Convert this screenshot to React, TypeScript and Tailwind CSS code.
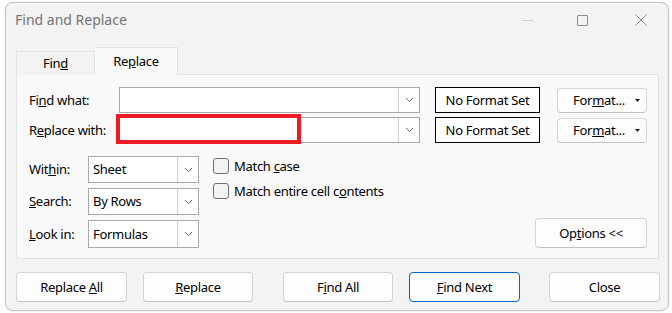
import React from 'react';

const font = { fontFamily: '"Noto Sans", "Liberation Sans", sans-serif' };

function Chevron() {
  return (
    <svg width="9" height="6" viewBox="0 0 9 6" className="block">
      <path d="M1 1 L4.5 4.5 L8 1" fill="none" stroke="#6b6b6b" strokeWidth="1" />
    </svg>
  );
}

function Combo({ width, height, value }: { width: string; height: string; value?: string }) {
  return (
    <div className={`flex ${width} ${height} border border-[#a8a8a8] bg-white`}>
      <div className="flex-1 flex items-center pl-[4px] text-black">{value}</div>
      <div className="w-[21px] flex items-center justify-center border-l border-[#cfcfcf]">
        <Chevron />
      </div>
    </div>
  );
}

function FormatButton() {
  return (
    <div className="ml-[17px] w-[90px] h-[25px] flex items-center justify-end pr-[6px] rounded-[4px] border border-[#d3d3d3] border-b-[#c2c2c2] bg-[#fdfdfd] text-black">
      <span>
        For<u>m</u>at...
      </span>
      <svg width="5" height="3" viewBox="0 0 5 3" className="ml-[10px]">
        <path d="M0 0 L5 0 L2.5 3 Z" fill="#1a1a1a" />
      </svg>
    </div>
  );
}

function NoFormat() {
  return (
    <div className="ml-[15px] w-[105px] h-[26px] flex items-center justify-center border border-black bg-white text-black">
      No Format Set
    </div>
  );
}

function Button({ children, className = '', primary = false }: { children: React.ReactNode; className?: string; primary?: boolean }) {
  return (
    <div
      className={`h-[30px] flex items-center justify-center rounded-[4px] border bg-[#fdfdfd] text-black ${
        primary ? 'border-[#0067c0]' : 'border-[#d3d3d3] border-b-[#c2c2c2]'
      } ${className}`}
    >
      <span>{children}</span>
    </div>
  );
}

function Checkbox({ children }: { children: React.ReactNode }) {
  return (
    <div className="flex items-center h-[16px]">
      <div className="w-[16px] h-[16px] rounded-[3px] border border-[#707070] bg-[#f3f3f3]" />
      <span className="ml-[5px] text-black">{children}</span>
    </div>
  );
}

export default function App() {
  return (
    <div className="w-[672px] h-[313px] bg-white overflow-hidden text-[13px] leading-none tracking-[-0.3px]" style={font}>
      <div className="ml-[5px] mt-[2px] w-[664px] h-[309px] rounded-[8px] border border-[#c4c4c4] bg-[#f3f3f3] flex flex-col shadow-[0_0_2px_rgba(0,0,0,0.15)]">
        {/* title bar */}
        <div className="h-[34px] flex items-center pl-[9px] pr-[21px] tracking-normal">
          <span className="text-[14px] text-[#737373]">Find and Replace</span>
          <div className="ml-auto flex items-center">
            <div className="w-[11px] h-px bg-[#cfcfcf]" />
            <div className="ml-[44px] w-[11px] h-[11px] border border-[#8c8c8c] rounded-[1px]" />
            <svg width="12" height="12" viewBox="0 0 12 12" className="ml-[47px]">
              <path d="M0.5 0.5 L11.5 11.5 M11.5 0.5 L0.5 11.5" stroke="#8c8c8c" strokeWidth="1" />
            </svg>
          </div>
        </div>

        {/* tabs */}
        <div className="mt-[11px] ml-[10px] flex items-end h-[27px] relative z-10 -mb-px">
          <div className="w-[79px] h-[24px] flex items-center justify-center border border-b-0 border-[#e3e3e3] bg-[#f3f3f3] text-black">
            <span>
              Fin<u>d</u>
            </span>
          </div>
          <div className="w-[83px] h-[28px] flex items-center justify-center border border-b-0 border-l-0 border-[#e3e3e3] bg-[#f9f9f9] text-black pb-[1px]">
            <span>
              Re<u>p</u>lace
            </span>
          </div>
        </div>

        {/* panel */}
        <div className="ml-[10px] w-[643px] h-[185px] border border-[#e3e3e3] bg-[#f9f9f9] pt-[12px] pl-[12px] pr-[11px] text-black">
          <div className="flex items-center">
            <div className="w-[90px]">
              Fi<u>n</u>d what:
            </div>
            <Combo width="w-[301px]" height="h-[26px]" />
            <NoFormat />
            <FormatButton />
          </div>
          <div className="flex items-center mt-[4px]">
            <div className="w-[90px]">
              R<u>e</u>place with:
            </div>
            <div className="relative">
              <Combo width="w-[301px]" height="h-[26px]" />
              <div className="absolute left-[-3px] top-[-3px] w-[185px] h-[30px] border-[4px] border-[#ed1c24]" />
            </div>
            <NoFormat />
            <FormatButton />
          </div>

          <div className="flex mt-[13px]">
            <div className="flex flex-col gap-[5px]">
              <div className="flex items-center">
                <div className="w-[59px]">
                  Wit<u>h</u>in:
                </div>
                <Combo width="w-[111px]" height="h-[27px]" value="Sheet" />
              </div>
              <div className="flex items-center">
                <div className="w-[59px]">
                  <u>S</u>earch:
                </div>
                <Combo width="w-[111px]" height="h-[27px]" value="By Rows" />
              </div>
              <div className="flex items-center">
                <div className="w-[59px]">
                  <u>L</u>ook in:
                </div>
                <Combo width="w-[111px]" height="h-[28px]" value="Formulas" />
              </div>
            </div>
            <div className="ml-[14px] pt-[2px] flex flex-col gap-[9px]">
              <Checkbox>
                Match <u>c</u>ase
              </Checkbox>
              <Checkbox>
                Match entire cell c<u>o</u>ntents
              </Checkbox>
            </div>
            <div className="ml-auto self-end">
              <Button className="w-[112px]">
                Op<u>t</u>ions &lt;&lt;
              </Button>
            </div>
          </div>
        </div>

        {/* bottom buttons */}
        <div className="mt-[13px] ml-[10px] flex">
          <Button className="w-[111px]">
            Replace <u>A</u>ll
          </Button>
          <Button className="w-[110px] ml-[16px]">
            <u>R</u>eplace
          </Button>
          <Button className="w-[110px] ml-[30px]">
            F<u>i</u>nd All
          </Button>
          <Button className="w-[111px] ml-[16px]" primary>
            <u>F</u>ind Next
          </Button>
          <Button className="w-[111px] ml-[29px]">Close</Button>
        </div>
      </div>
    </div>
  );
}
